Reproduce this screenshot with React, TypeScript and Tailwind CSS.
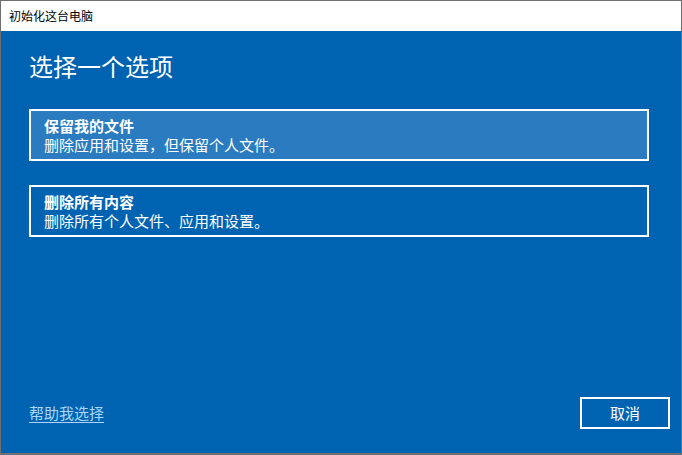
export default function App() {
  const font = { fontFamily: '"Noto Sans CJK SC", "Noto Sans", sans-serif' };
  return (
    <div
      className="w-[682px] h-[455px] flex flex-col border border-b-2 border-[#6f6f6f] bg-[#0063b1] text-white"
      style={font}
    >
      <div className="h-[30px] shrink-0 bg-white text-black text-[12px] leading-[30px] pl-[8px]">
        初始化这台电脑
      </div>
      <div className="flex-1 flex flex-col">
        <div className="px-[28px] pt-[19px]">
          <h1 className="text-[24px] leading-[32px] font-normal">选择一个选项</h1>
          <div className="mt-[27px] w-[620px] h-[52px] border-2 border-white bg-[#2a7bbf] px-[13px] pt-[5px] pb-[5px] text-[15px] leading-[19px]">
            <div className="font-bold">保留我的文件</div>
            <div>删除应用和设置，但保留个人文件。</div>
          </div>
          <div className="mt-[24px] w-[620px] h-[52px] border-2 border-white px-[13px] pt-[5px] pb-[5px] text-[15px] leading-[19px]">
            <div className="font-bold">删除所有内容</div>
            <div>删除所有个人文件、应用和设置。</div>
          </div>
        </div>
        <div className="mt-auto flex items-center justify-between pl-[28px] pr-[11px] pb-[24px]">
          <a className="text-[15px] leading-[20px] text-[#a6d8ff] underline underline-offset-[3px] cursor-pointer">
            帮助我选择
          </a>
          <button className="w-[90px] h-[32px] border-2 border-white text-[15px] leading-[20px] text-white">
            取消
          </button>
        </div>
      </div>
    </div>
  );
}
